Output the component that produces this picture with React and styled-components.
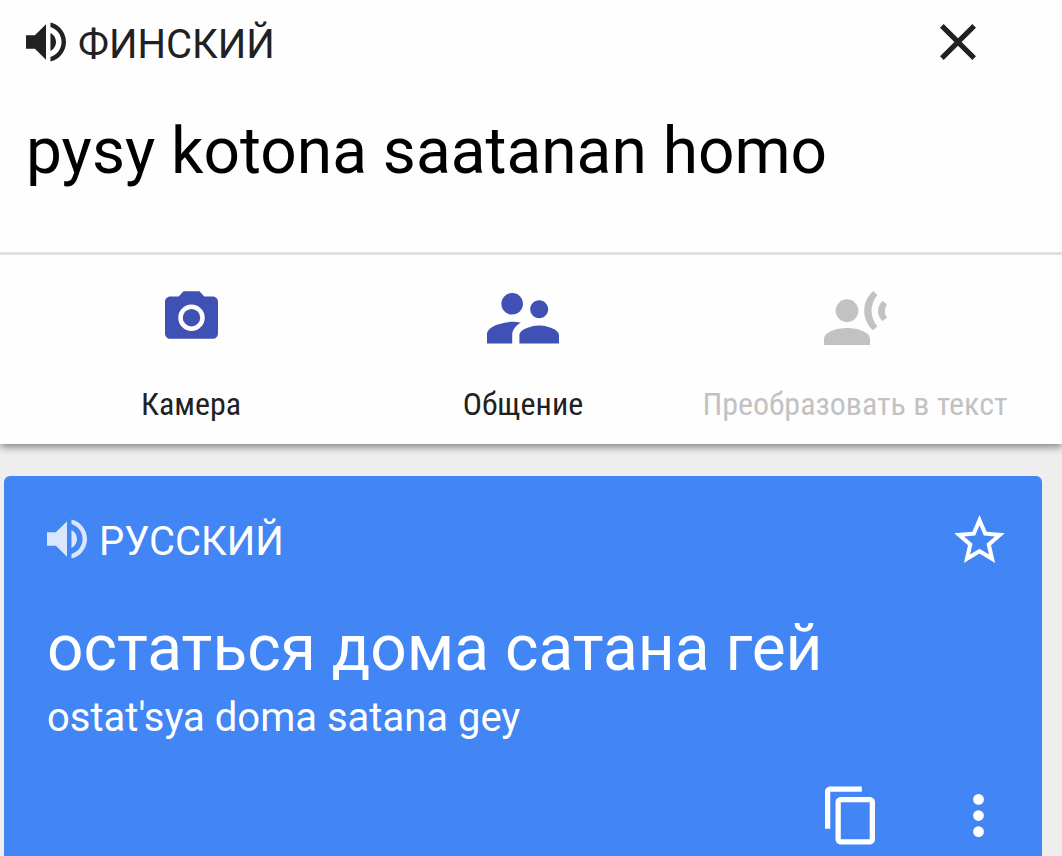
import React, { useState } from "react";
import styled, { createGlobalStyle } from "styled-components";

const GlobalStyle = createGlobalStyle`
  *, *::before, *::after { box-sizing: border-box; }
  body {
    margin: 0;
    background: #eeeeee;
    font-family: Roboto, "Liberation Sans", sans-serif;
  }
  button { font: inherit; }
`;

const Page = styled.main`
  min-height: 100vh;
  display: flex;
  flex-direction: column;
  overflow: hidden;
`;

const Source = styled.section`
  padding: 20px 86px 60px 26px;
  background: #fefefe;
  border-bottom: 3px solid #e0e0e0;
`;

const Header = styled.header`
  display: flex;
  align-items: center;
  justify-content: space-between;
  height: 44px;
`;

const Language = styled.div`
  display: flex;
  align-items: center;
  gap: 12px;
  color: ${(p) => p.$color};
`;

const LanguageName = styled.h2`
  margin: 0;
  padding-top: 6px;
  font-size: 40px;
  line-height: 48px;
  font-weight: 400;
`;

const IconButton = styled.button`
  display: flex;
  padding: 0;
  border: 0;
  background: none;
  color: ${(p) => p.$color || "inherit"};
  opacity: ${(p) => (p.$faded ? 0.8 : 1)};
  cursor: pointer;
`;

const Icon = styled.svg`
  display: block;
  flex: none;
  fill: currentColor;
`;

const SourceInput = styled.input`
  display: block;
  width: 100%;
  height: 80px;
  margin-top: 48px;
  padding: 0;
  border: 0;
  outline: 0;
  background: none;
  color: #000000;
  font-family: inherit;
  font-size: 64px;
  line-height: 80px;
`;

const Tools = styled.nav`
  position: relative;
  display: grid;
  grid-template-columns: repeat(3, 1fr);
  padding: 36px 41px 20px 25px;
  background: #fefefe;
  box-shadow: 0 3px 8px rgba(0, 0, 0, 0.45);
  clip-path: inset(0 0 -14px 0);
`;

const Tool = styled.button`
  display: flex;
  flex-direction: column;
  align-items: center;
  gap: 37px;
  padding: 0;
  border: 0;
  background: none;
  color: ${(p) => (p.disabled ? "#c2c2c2" : "#3f51b5")};
`;

const ToolIcon = styled.span`
  display: flex;
  align-items: flex-start;
  height: 56px;
`;

const ToolLabel = styled.span`
  color: ${(p) => (p.$muted ? "#c2c2c2" : "#212121")};
  font-family: "Roboto Condensed", Roboto, sans-serif;
  font-size: 32px;
  line-height: 40px;
  white-space: nowrap;
`;

const Card = styled.section`
  flex: 1;
  margin: 32px 20px 0 4px;
  padding: 41px 37px 11px 43px;
  border-radius: 6px 6px 0 0;
  background: #4285f4;
  color: #ffffff;
`;

const Translation = styled.p`
  margin: 48px 0 0;
  font-size: 64px;
  line-height: 80px;
`;

const Transliteration = styled.p`
  margin: 5px 0 0;
  font-size: 40px;
  line-height: 48px;
`;

const Actions = styled.div`
  display: flex;
  align-items: center;
  justify-content: flex-end;
  gap: 98px;
  margin-top: 44px;
  padding-right: 21px;
`;

const VolumeIcon = () => (
  <Icon width="40" height="40" viewBox="3 3 18 18" aria-hidden="true">
    <path d="M3 9v6h4l5 5V4L7 9H3zM16.5 12c0-1.77-1.02-3.29-2.5-4.03v8.05c1.48-.73 2.5-2.25 2.5-4.02zM14 3.23v2.06c2.89.86 5 3.54 5 6.71s-2.11 5.85-5 6.71v2.06c4.01-.91 7-4.49 7-8.77s-2.99-7.86-7-8.77z" />
  </Icon>
);

const CloseIcon = () => (
  <Icon width="36" height="36" viewBox="5 5 14 14" aria-hidden="true">
    <path d="M19 6.41L17.59 5 12 10.59 6.41 5 5 6.41 10.59 12 5 17.59 6.41 19 12 13.41 17.59 19 19 17.59 13.41 12z" />
  </Icon>
);

const CameraIcon = () => (
  <Icon width="53" height="48" viewBox="2 2 20 18" aria-hidden="true">
    <circle cx="12" cy="12" r="3.3" />
    <path d="M9 2L7.17 4H4c-1.1 0-2 .9-2 2v12c0 1.1.9 2 2 2h16c1.1 0 2-.9 2-2V6c0-1.1-.9-2-2-2h-3.17L15 2H9zm3 15c-2.76 0-5-2.24-5-5s2.24-5 5-5 5 2.24 5 5-2.24 5-5 5z" />
  </Icon>
);

const PeopleIcon = () => (
  <Icon width="72" height="53" viewBox="2 4.44 20 14.72" aria-hidden="true">
    <path d="M16.5 12c1.38 0 2.49-1.12 2.49-2.5S17.88 7 16.5 7C15.12 7 14 8.12 14 9.5s1.12 2.5 2.5 2.5zM9 11c1.66 0 2.99-1.34 2.99-3S10.66 5 9 5C7.34 5 6 6.34 6 8s1.34 3 3 3zm7.5 3c-1.83 0-5.5.92-5.5 2.75V19h11v-2.25c0-1.83-3.67-2.75-5.5-2.75zM9 13c-2.33 0-7 1.17-7 3.5V19h7v-2.25c0-.85.33-2.34 2.37-3.47C10.5 13.1 9.66 13 9 13z" />
  </Icon>
);

const VoiceIcon = () => (
  <Icon width="63" height="54" viewBox="0 0 189 162" aria-hidden="true">
    <circle cx="69" cy="59" r="34" />
    <path d="M0 162v-17c0-23 39-34 69-34s69 11 69 34v17z" />
    <path d="M147 0l13 12c-23 28-23 66 0 94l-13 12c-35-33-35-85 0-118z" />
    <path d="M175 30l14 10c-8 12-8 28 0 40l-14 10c-17-17-17-43 0-60z" />
  </Icon>
);

const StarIcon = () => (
  <Icon width="51" height="48" viewBox="2 2 20 19" aria-hidden="true">
    <path d="M22 9.24l-7.19-.62L12 2 9.19 8.63 2 9.24l5.46 4.73L5.82 21 12 17.27 18.18 21l-1.63-7.03L22 9.24zM12 15.4l-3.76 2.27 1-4.28-3.32-2.88 4.38-.38L12 6.1l1.71 4.04 4.38.38-3.32 2.88 1 4.28L12 15.4z" />
  </Icon>
);

const CopyIcon = () => (
  <Icon width="50" height="59" viewBox="2 1 19 22" aria-hidden="true">
    <path d="M16 1H4c-1.1 0-2 .9-2 2v14h2V3h12V1zm3 4H8c-1.1 0-2 .9-2 2v14c0 1.1.9 2 2 2h11c1.1 0 2-.9 2-2V7c0-1.1-.9-2-2-2zm0 16H8V7h11v14z" />
  </Icon>
);

const MoreIcon = () => (
  <Icon width="11" height="43" viewBox="10 4 4 16" aria-hidden="true">
    <circle cx="12" cy="6" r="2" />
    <circle cx="12" cy="12" r="2" />
    <circle cx="12" cy="18" r="2" />
  </Icon>
);

const tools = [
  { label: "Камера", Glyph: CameraIcon },
  { label: "Общение", Glyph: PeopleIcon },
  { label: "Преобразовать в текст", Glyph: VoiceIcon, disabled: true },
];

export default function App() {
  const [text, setText] = useState("pysy kotona saatanan homo");

  return (
    <Page>
      <GlobalStyle />
      <Source>
        <Header>
          <Language $color="#212121">
            <IconButton type="button" aria-label="Прослушать">
              <VolumeIcon />
            </IconButton>
            <LanguageName id="source-language">ФИНСКИЙ</LanguageName>
          </Language>
          <IconButton
            type="button"
            aria-label="Очистить"
            $color="#212121"
            onClick={() => setText("")}
          >
            <CloseIcon />
          </IconButton>
        </Header>
        <SourceInput
          type="text"
          aria-labelledby="source-language"
          spellCheck={false}
          value={text}
          onChange={(e) => setText(e.target.value)}
        />
      </Source>

      <Tools>
        {tools.map(({ label, Glyph, disabled }) => (
          <Tool key={label} type="button" disabled={disabled}>
            <ToolIcon>
              <Glyph />
            </ToolIcon>
            <ToolLabel $muted={disabled}>{label}</ToolLabel>
          </Tool>
        ))}
      </Tools>

      <Card>
        <Header>
          <Language $color="#ffffff">
            <IconButton type="button" aria-label="Прослушать перевод" $faded>
              <VolumeIcon />
            </IconButton>
            <LanguageName>РУССКИЙ</LanguageName>
          </Language>
          <IconButton type="button" aria-label="В избранное">
            <StarIcon />
          </IconButton>
        </Header>
        <Translation>остаться дома сатана гей</Translation>
        <Transliteration>ostat'sya doma satana gey</Transliteration>
        <Actions>
          <IconButton type="button" aria-label="Копировать">
            <CopyIcon />
          </IconButton>
          <IconButton type="button" aria-label="Ещё">
            <MoreIcon />
          </IconButton>
        </Actions>
      </Card>
    </Page>
  );
}
